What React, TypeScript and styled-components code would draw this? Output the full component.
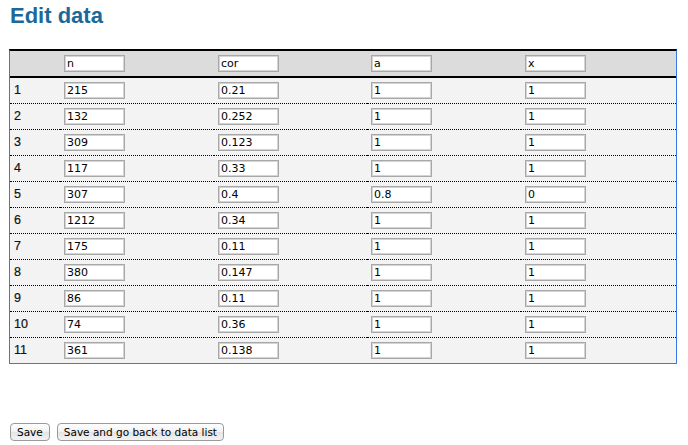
import styled, { createGlobalStyle } from "styled-components";

const columns = ["n", "cor", "a", "x"];

const rows: string[][] = [
  ["215", "0.21", "1", "1"],
  ["132", "0.252", "1", "1"],
  ["309", "0.123", "1", "1"],
  ["117", "0.33", "1", "1"],
  ["307", "0.4", "0.8", "0"],
  ["1212", "0.34", "1", "1"],
  ["175", "0.11", "1", "1"],
  ["380", "0.147", "1", "1"],
  ["86", "0.11", "1", "1"],
  ["74", "0.36", "1", "1"],
  ["361", "0.138", "1", "1"],
];

export default function App() {
  return (
    <>
      <GlobalStyle />
      <Page>
        <Title>Edit data</Title>
        <DataTable>
          <colgroup>
            <col style={{ width: 50 }} />
            <col style={{ width: 154 }} />
            <col style={{ width: 153 }} />
            <col style={{ width: 154 }} />
            <col />
          </colgroup>
          <thead>
            <tr>
              <HeadCell />
              {columns.map((c) => (
                <HeadCell key={c}>
                  <Field defaultValue={c} />
                </HeadCell>
              ))}
            </tr>
          </thead>
          <tbody>
            {rows.map((r, i) => (
              <tr key={i}>
                <BodyCell $last={i === rows.length - 1}>
                  <RowLabel>{i + 1}</RowLabel>
                </BodyCell>
                {r.map((v, j) => (
                  <BodyCell key={j} $last={i === rows.length - 1}>
                    <Field defaultValue={v} />
                  </BodyCell>
                ))}
              </tr>
            ))}
          </tbody>
        </DataTable>
        <Actions>
          <Button>Save</Button>
          <Button>Save and go back to data list</Button>
        </Actions>
      </Page>
    </>
  );
}

const GlobalStyle = createGlobalStyle`
  body {
    margin: 0;
    background: #fff;
    font-family: "DejaVu Sans", Verdana, sans-serif;
  }
`;

const Page = styled.div`
  padding: 3px 0 0 9px;
  width: 668px;
`;

const Title = styled.h1`
  margin: 0 0 20px 1px;
  font-family: "Liberation Sans", Arial, sans-serif;
  font-size: 22px;
  line-height: 26px;
  font-weight: bold;
  color: #1b6899;
`;

const DataTable = styled.table`
  width: 668px;
  table-layout: fixed;
  border-collapse: separate;
  border-spacing: 0;
  border-top: 2px solid #000;
  border-left: 1px solid #3a78e6;
  border-right: 1px solid #3a78e6;
  border-bottom: 1px solid #3a78e6;
`;

const HeadCell = styled.th`
  height: 17px;
  padding: 4px 4px;
  text-align: left;
  font-size: 12px;
  line-height: 17px;
  background: #dcdcdc;
  border-bottom: 2px solid #000;
`;

const BodyCell = styled.td<{ $last?: boolean }>`
  height: 17px;
  padding: 4px 4px;
  font-size: 12px;
  line-height: 17px;
  background: #f3f3f3;
  border-bottom: ${(p) => (p.$last ? "none" : "1px dotted #000")};
`;

const RowLabel = styled.span`
  display: block;
  font-family: "Liberation Sans", Arial, sans-serif;
  font-size: 12.5px;
  line-height: 17px;
  color: #111;
  -webkit-text-stroke: 0.2px #111;
`;

const Field = styled.input`
  display: block;
  box-sizing: border-box;
  width: 61px;
  height: 17px;
  margin: 0;
  padding: 0 2px;
  border: 1px solid #a8a8a8;
  box-shadow: inset 0 0 0 1px #d4d4d4;
  background: #fff;
  font-family: "DejaVu Sans", Verdana, sans-serif;
  font-size: 11px;
  color: #000;
  outline: none;
`;

const Actions = styled.div`
  display: flex;
  gap: 7px;
  margin: 59px 0 0 1px;
`;

const Button = styled.button`
  height: 18px;
  padding: 0 6px;
  border: 1px solid #9a9a9a;
  border-radius: 4px;
  background: linear-gradient(#ffffff, #f1f1f1 50%, #e4e4e4 51%, #f3f3f3);
  font-family: "DejaVu Sans", Verdana, sans-serif;
  font-size: 10.5px;
  line-height: 16px;
  color: #000;
  cursor: pointer;
`;
